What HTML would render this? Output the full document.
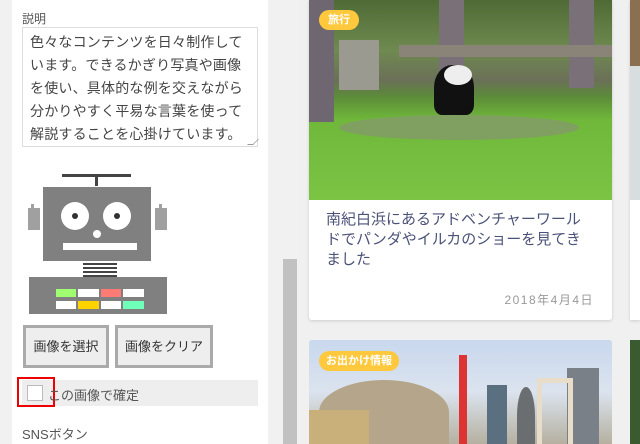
<!DOCTYPE html>
<html><head><meta charset="utf-8"><style>
*{margin:0;padding:0;box-sizing:border-box}
body{width:640px;height:444px;overflow:hidden;background:#f1f1f1;font-family:"Liberation Sans","Noto Sans CJK JP",sans-serif;position:relative}
.a{position:absolute}
</style></head><body>
<div class="a" style="left:12px;top:0;width:256px;height:444px;background:#fff"></div>
<div class="a" style="left:22px;top:10px;font-size:12px;color:#555">説明</div>
<div class="a" style="left:22px;top:27px;width:236px;height:120px;border:1px solid #ddd;padding:3px 7px;font-size:14px;line-height:23px;color:#444;letter-spacing:0.2px">色々なコンテンツを日々制作しています。できるかぎり写真や画像を使い、具体的な例を交えながら分かりやすく平易な言葉を使って解説することを心掛けています。</div>
<div class="a" style="left:250px;top:139px;width:6px;height:6px;border-right:1px solid #999;border-bottom:1px solid #999;transform:skew(-45deg)"></div>
<svg class="a" style="left:0;top:160px" width="200" height="160">
<rect x="62" y="14" width="69" height="3" fill="#444"/>
<rect x="95" y="14" width="3" height="12" fill="#444"/>
<rect x="43" y="27" width="108" height="74" fill="#808080"/>
<rect x="31" y="44" width="3" height="4" fill="#a0a0a0"/><rect x="28" y="48" width="12" height="22" fill="#a0a0a0"/>
<rect x="159" y="44" width="3" height="4" fill="#a0a0a0"/><rect x="155" y="48" width="12" height="22" fill="#a0a0a0"/>
<circle cx="75" cy="56" r="14" fill="#fff"/><circle cx="75" cy="56" r="3" fill="#333"/>
<circle cx="117" cy="56" r="14" fill="#fff"/><circle cx="117" cy="56" r="3" fill="#333"/>
<circle cx="97" cy="74" r="4" fill="#fff"/>
<rect x="63" y="83" width="74" height="7" fill="#fff"/>
<rect x="83" y="103" width="34" height="2" fill="#444"/><rect x="83" y="107" width="34" height="2" fill="#444"/><rect x="83" y="111" width="34" height="2" fill="#444"/><rect x="83" y="115" width="34" height="2" fill="#444"/>
<rect x="29" y="117" width="138" height="37" fill="#808080"/>
<rect x="56" y="129" width="20" height="8" fill="#a0ff70"/><rect x="78" y="129" width="21" height="8" fill="#fff"/><rect x="101" y="129" width="20" height="8" fill="#ff7b73"/><rect x="123" y="129" width="21" height="8" fill="#fff"/>
<rect x="56" y="141" width="20" height="8" fill="#fff"/><rect x="78" y="141" width="21" height="8" fill="#ffd200"/><rect x="101" y="141" width="20" height="8" fill="#fff"/><rect x="123" y="141" width="21" height="8" fill="#6fffb8"/>
</svg>
<div class="a" style="left:23px;top:325px;width:86px;height:43px;border:3px solid #aaa;background:#eee;font-size:13px;color:#333;text-align:center;line-height:37px">画像を選択</div>
<div class="a" style="left:115px;top:325px;width:98px;height:43px;border:3px solid #aaa;background:#eee;font-size:13px;color:#333;text-align:center;line-height:37px">画像をクリア</div>
<div class="a" style="left:22px;top:380px;width:236px;height:26px;background:#eee"></div>
<div class="a" style="left:27px;top:385px;width:16px;height:16px;border:1px solid #bbb;background:#fff"></div>
<div class="a" style="left:17px;top:377px;width:38px;height:30px;border:2px solid #e00"></div>
<div class="a" style="left:48px;top:385px;font-size:13px;color:#555">この画像で確定</div>
<div class="a" style="left:22px;top:424px;font-size:13px;color:#555">SNSボタン</div>
<div class="a" style="left:283px;top:259px;width:14px;height:185px;background:#c1c1c1"></div>
<div class="a" style="left:298px;top:0;width:342px;height:444px;background:#f0f0f0"></div>
<div class="a" style="left:309px;top:0;width:303px;height:320px;background:#fff;box-shadow:0 1px 3px rgba(0,0,0,.15);border-radius:0 0 3px 3px;overflow:hidden">
 <div class="a" style="left:0;top:0;width:303px;height:200px;background:linear-gradient(#4f6a35 0,#6f8a50 25%,#6b7058 40%,#5c8a3a 48%,#6fb83a 60%,#7cc444 100%)"></div>
 <div class="a" style="left:0;top:0;width:25px;height:122px;background:#6e6670"></div>
 <div class="a" style="left:130px;top:0;width:25px;height:75px;background:#7a7078"></div>
 <div class="a" style="left:260px;top:0;width:25px;height:88px;background:#7a7078"></div>
 <div class="a" style="left:90px;top:45px;width:213px;height:12px;background:#8a8478"></div>
 <div class="a" style="left:30px;top:40px;width:40px;height:50px;background:#9a9a90"></div>
 <div class="a" style="left:125px;top:65px;width:40px;height:50px;background:#111;border-radius:45% 45% 20% 20%"></div>
 <div class="a" style="left:135px;top:65px;width:28px;height:20px;background:#eee;border-radius:50%"></div>
 <div class="a" style="left:30px;top:115px;width:240px;height:25px;background:#7fa060;border-radius:50%"></div>
 <div class="a" style="left:17px;top:210px;width:258px;font-size:15px;line-height:20px;color:#4b5278">南紀白浜にあるアドベンチャーワールドでパンダやイルカのショーを見てきました</div>
 <div class="a" style="right:18px;top:291px;font-size:12px;color:#999;letter-spacing:1.5px">2018年4月4日</div>
</div>
<div class="a" style="left:319px;top:10px;width:40px;height:20px;border-radius:10px;background:#ffc83d;color:#fff;font-size:11px;font-weight:bold;text-align:center;line-height:20px">旅行</div>
<div class="a" style="left:309px;top:340px;width:303px;height:104px;border-radius:3px 3px 0 0;overflow:hidden;background:linear-gradient(#c9d8ee,#dbe3ee 50%,#b5b0a0)">
 <div class="a" style="left:10px;top:40px;width:130px;height:64px;background:#b5a58a;border-radius:50% 50% 0 0"></div>
 <div class="a" style="left:0;top:70px;width:60px;height:34px;background:#c9b07a"></div>
 <div class="a" style="left:150px;top:15px;width:8px;height:89px;background:#d33"></div>
 <div class="a" style="left:178px;top:45px;width:20px;height:59px;background:#5a7080"></div>
 <div class="a" style="left:208px;top:47px;width:18px;height:57px;background:#6a6e70;border-radius:50% 50% 0 0"></div>
 <div class="a" style="left:258px;top:28px;width:32px;height:76px;background:#7a8088"></div>
 <div class="a" style="left:228px;top:38px;width:36px;height:66px;border:5px solid #e8ddc8;border-bottom:0"></div>
</div>
<div class="a" style="left:319px;top:351px;width:80px;height:20px;border-radius:10px;background:#ffc83d;color:#fff;font-size:11px;font-weight:bold;text-align:center;line-height:20px">お出かけ情報</div>
<div class="a" style="left:630px;top:0;width:10px;height:320px;background:#fff;box-shadow:0 1px 3px rgba(0,0,0,.15)"><div style="height:66px;background:#8a7050"></div><div style="height:134px;background:#d8dde0"></div></div>
<div class="a" style="left:630px;top:340px;width:10px;height:104px;background:#3a5a30"></div>
</body></html>
